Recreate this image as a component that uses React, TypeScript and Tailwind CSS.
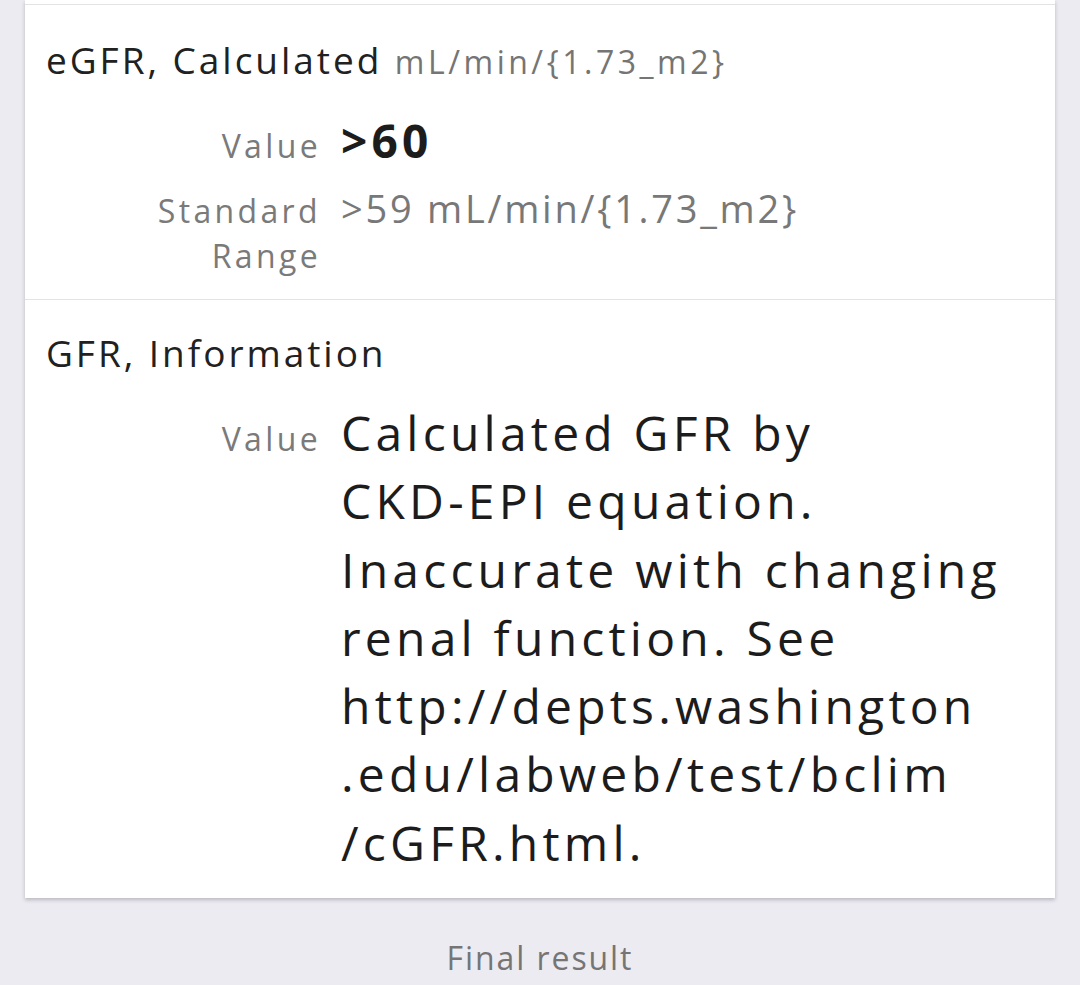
import React from "react";

const font = { fontFamily: '"Open Sans", "Noto Sans", sans-serif' };

function Row({ label, children }: { label: React.ReactNode; children: React.ReactNode }) {
  return (
    <div className="flex items-baseline">
      <div className="w-[275px] shrink-0 text-right text-[32px] leading-[45px] tracking-[0.105em] text-[#7a7a7a]">
        {label}
      </div>
      <div className="pl-[20px] min-w-0">{children}</div>
    </div>
  );
}

export default function App() {
  const info = [
    "Calculated GFR by",
    "CKD-EPI equation.",
    "Inaccurate with changing",
    "renal function. See",
    "http://depts.washington",
    ".edu/labweb/test/bclim",
    "/cGFR.html.",
  ];

  return (
    <div style={font} className="w-[1080px] h-[985px] overflow-hidden bg-[#edebf2]">
      <div className="mx-[25px] bg-white shadow-[0_2px_4px_rgba(0,0,0,0.22)]">
        <div className="h-[4px]" />

        <section className="border-t border-[#e3e3e3] pt-[31px] pb-[21px] pl-[21px]">
          <h2 className="text-[37px] leading-[48px] tracking-[0.08em] text-[#212121]">
            eGFR, Calculated{" "}
            <span className="text-[32px] tracking-[0.11em] text-[#757575]">mL/min/{"{"}1.73_m2{"}"}</span>
          </h2>

          <div className="mt-[24px] flex flex-col gap-[16px]">
            <Row label="Value">
              <span className="text-[46px] leading-[60px] font-bold tracking-[0.09em] text-[#1c1c1c]">&gt;60</span>
            </Row>
            <Row label={<>Standard<br />Range</>}>
              <span className="text-[38px] leading-[45px] tracking-[0.072em] text-[#787878] whitespace-nowrap">
                &gt;59 mL/min/{"{"}1.73_m2{"}"}
              </span>
            </Row>
          </div>
        </section>

        <section className="border-t border-[#e3e3e3] pt-[29px] pb-[21px] pl-[21px]">
          <h2 className="text-[37px] leading-[48px] tracking-[0.08em] text-[#212121]">GFR, Information</h2>

          <div className="mt-[22px]">
            <Row label="Value">
              <div className="text-[48px] leading-[68.3px] font-medium tracking-[0.088em] text-[#1c1c1c]">
                {info.map((line) => (
                  <div key={line} className="whitespace-nowrap">{line}</div>
                ))}
              </div>
            </Row>
          </div>
        </section>
      </div>

      <p className="mt-[38px] text-center text-[32px] leading-[44px] tracking-[0.06em] text-[#757575]">
        Final result
      </p>
    </div>
  );
}
